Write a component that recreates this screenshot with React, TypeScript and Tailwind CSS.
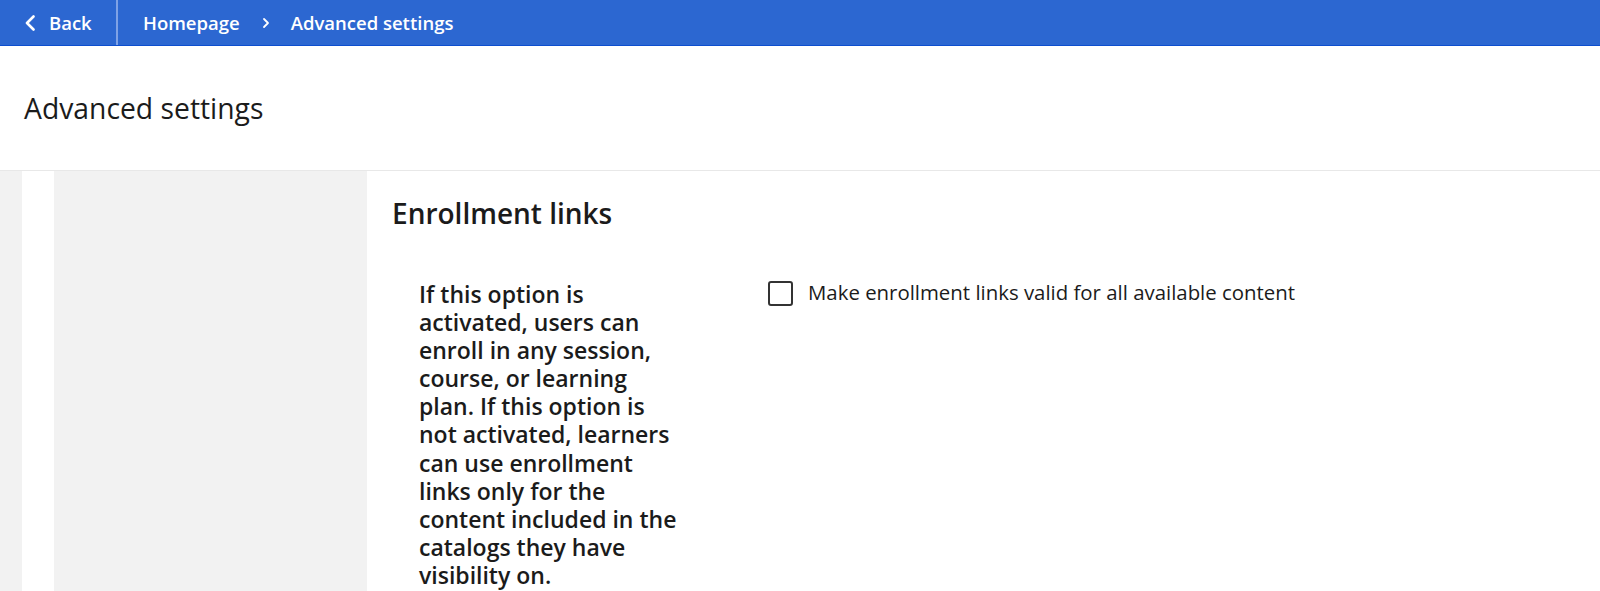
import React from "react";

const ChevronLeft = () => (
  <svg width="12" height="16" viewBox="0 0 12 16" fill="none">
    <path d="M9.5 1.5L3 8l6.5 6.5" stroke="white" strokeWidth="2.6" strokeLinecap="round" strokeLinejoin="round" />
  </svg>
);

const ChevronRight = () => (
  <svg width="8" height="12" viewBox="0 0 8 12" fill="none">
    <path d="M2 2l4 4-4 4" stroke="white" strokeWidth="1.8" strokeLinecap="round" strokeLinejoin="round" />
  </svg>
);

const App: React.FC = () => {
  return (
    <div className="min-h-screen bg-white font-['Open_Sans',sans-serif] text-[#1b1b1b]">
      <header className="flex h-[46px] items-stretch border-b border-[#0d4ecf] bg-[#2c67d1] text-white">
        <button className="flex w-[116px] items-center gap-[13px] pl-[24px] text-[18.5px] font-semibold">
          <ChevronLeft />
          <span>Back</span>
        </button>
        <div className="w-[2px] bg-[#7fa2e6]" />
        <nav className="flex items-center pl-[25px] text-[18.5px] font-semibold">
          <span>Homepage</span>
          <span className="ml-[22px] mr-[21px] flex items-center">
            <ChevronRight />
          </span>
          <span>Advanced settings</span>
        </nav>
      </header>

      <div className="flex h-[125px] items-center border-b border-[#e8e8e8] px-[24px]">
        <h1 className="text-[28.3px] font-normal">Advanced settings</h1>
      </div>

      <div className="flex min-h-[420px]">
        <div className="w-[22px] bg-[#f2f2f2]" />
        <div className="w-[32px] bg-white" />
        <div className="w-[313px] bg-[#f2f2f2]" />
        <main className="flex-1 pl-[25px] pt-[26px]">
          <h2 className="text-[28px] font-semibold leading-[32px]">Enrollment links</h2>
          <div className="mt-[51px] flex items-start">
            <p className="ml-[27px] w-[266px] text-[23px] font-semibold leading-[28.1px]">
              If this option is activated, users can enroll in any session, course, or learning plan. If this
              option is not activated, learners can use enrollment links only for the content included in the
              catalogs they have visibility on.
            </p>
            <label className="ml-[83px] flex items-start gap-[15px]">
              <span className="mt-[1px] block h-[25px] w-[25px] rounded-[3px] border-2 border-[#333]" />
              <span className="text-[20.4px] leading-[25px]">Make enrollment links valid for all available content</span>
            </label>
          </div>
        </main>
      </div>
    </div>
  );
};

export default App;
